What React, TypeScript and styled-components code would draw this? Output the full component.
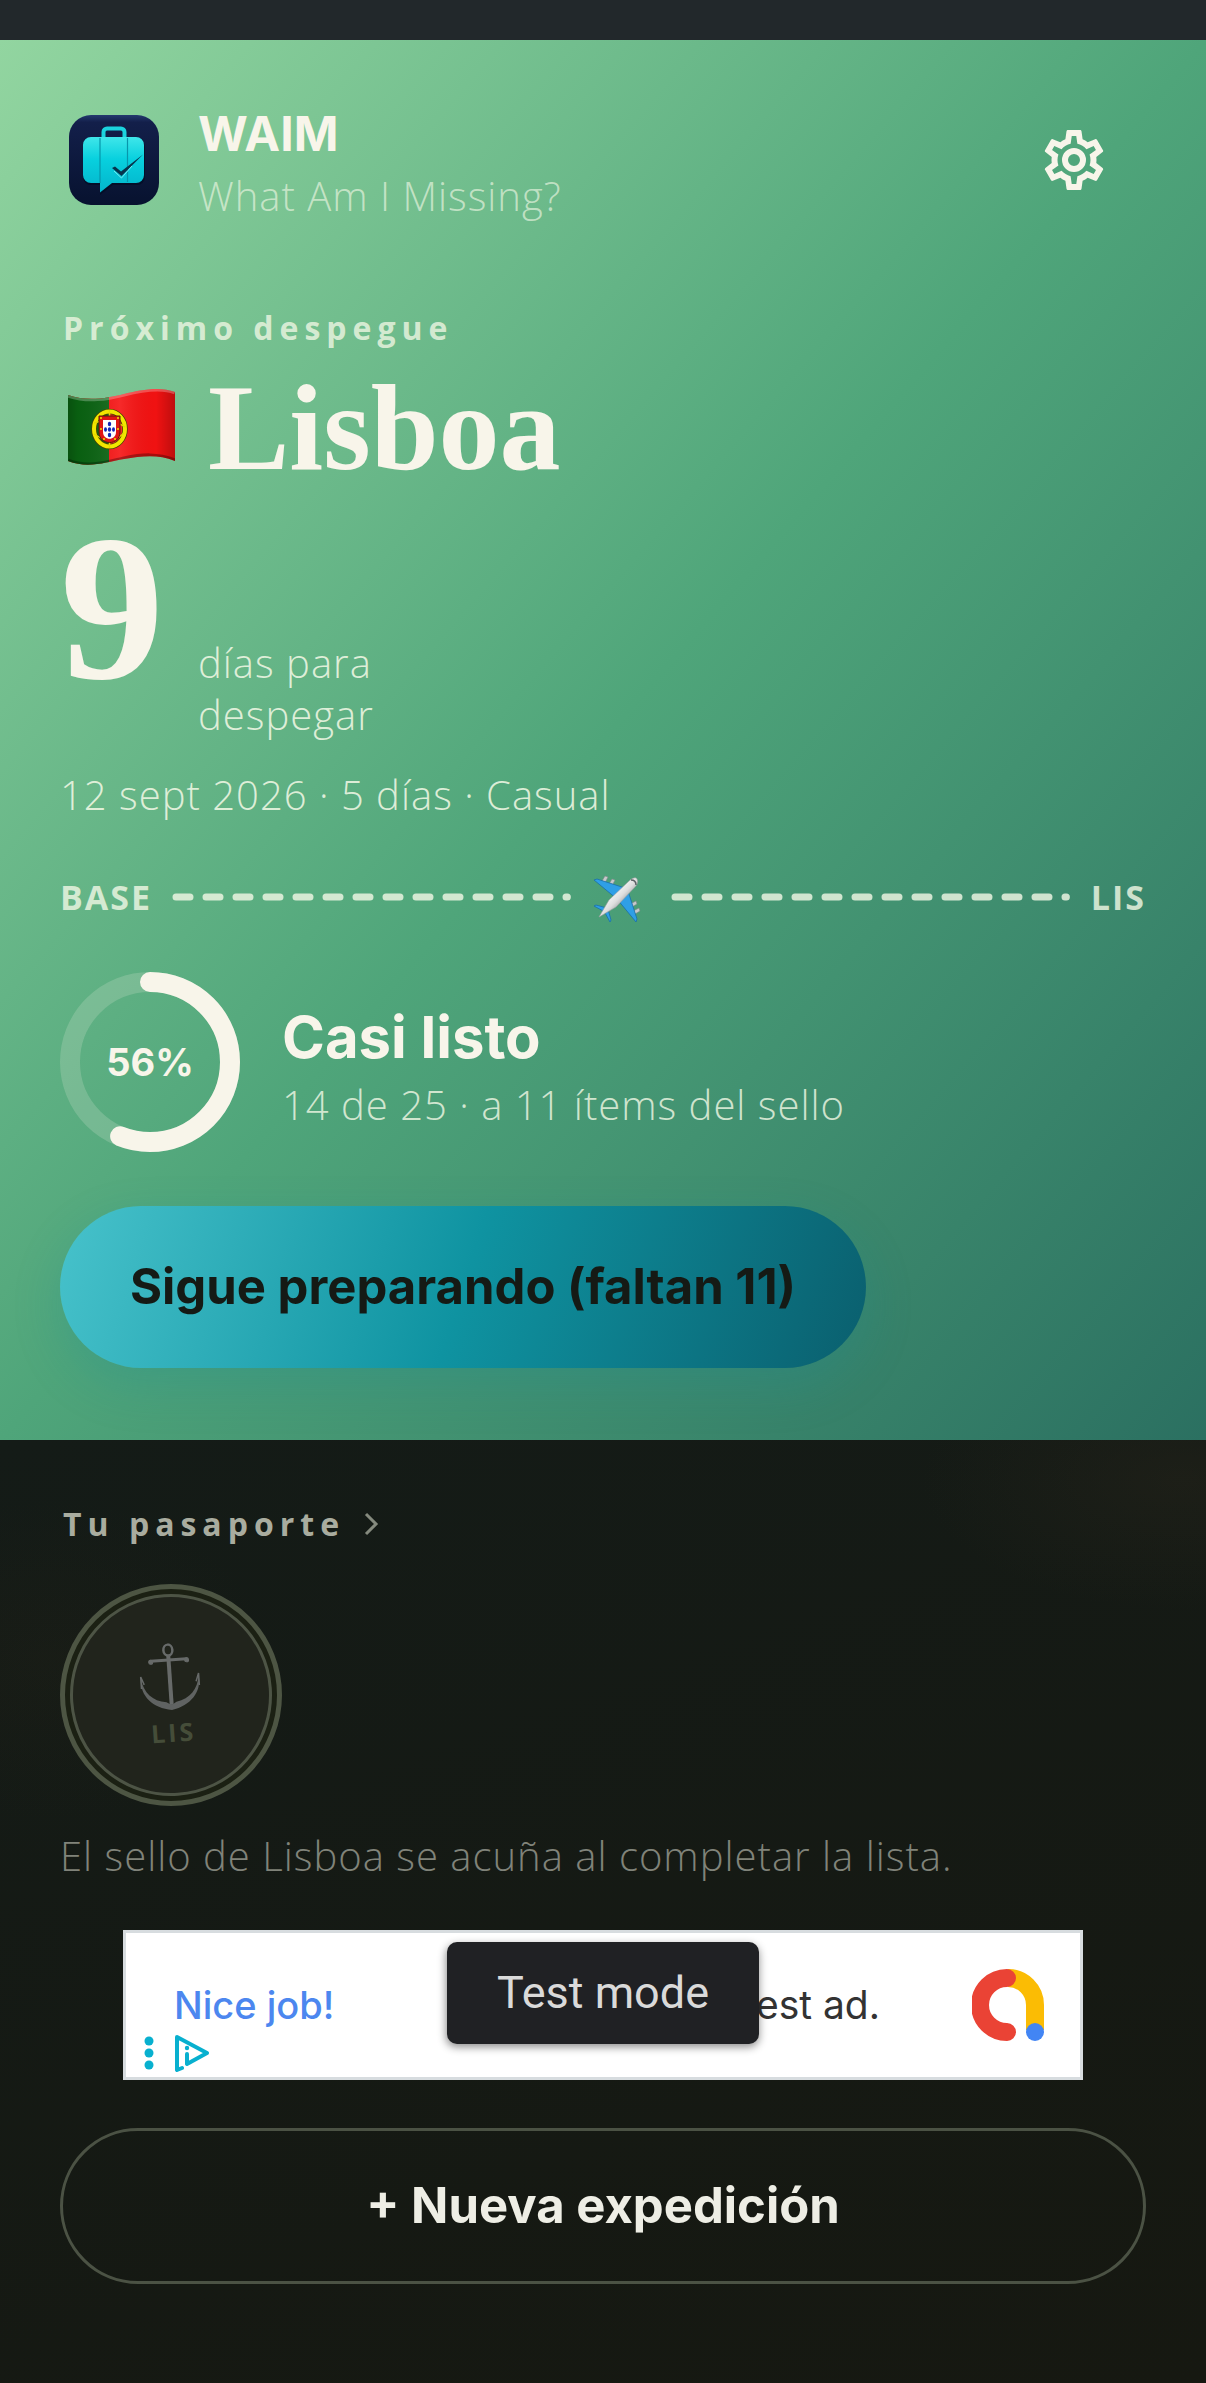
import React from "react";
import styled, { createGlobalStyle } from "styled-components";

const cream = "#f8f5ea";
const soft = "rgba(240, 247, 228, 0.88)";
const bodyFont = '"Open Sans", "Noto Sans", sans-serif';
const displayFont = 'Inter, "Liberation Sans", sans-serif';
const serifFont = '"Liberation Serif", serif';

const GlobalStyle = createGlobalStyle`
  *, *::before, *::after { box-sizing: border-box; }
  body { margin: 0; background: #151a15; }
  h1, h2, p { margin: 0; }
  button { border: 0; padding: 0; background: none; color: inherit; font: inherit; cursor: pointer; }
  svg { display: block; flex: none; }
`;

const Screen = styled.div`
  min-height: 100vh;
  display: flex;
  flex-direction: column;
  background: #151a15;
  font-family: ${bodyFont};
`;

const StatusBar = styled.div`
  height: 40px;
  background: #22282b;
`;

const Hero = styled.header`
  display: flex;
  flex-direction: column;
  padding: 58px 60px 72px;
  background: linear-gradient(to bottom right, #92d5a0 0%, #4fa57a 50%, #2b7061 100%);
  color: ${cream};
`;

const Brand = styled.div`
  display: flex;
  align-items: center;
  gap: 30px;
`;

const BrandText = styled.div`
  flex: 1;
`;

const BrandName = styled.h1`
  font: 700 48px/72px ${displayFont};
`;

const Text = styled.p<{ $tone?: string }>`
  font-size: 40px;
  font-weight: 350;
  line-height: 52px;
  letter-spacing: 1px;
  color: ${(p) => p.$tone ?? soft};
`;

const IconButton = styled.button`
  display: grid;
  place-items: center;
  width: 144px;
  height: 108px;
`;

const Eyebrow = styled.p`
  margin-top: 82px;
  padding-left: 3px;
  font-size: 32px;
  font-weight: 700;
  line-height: 48px;
  letter-spacing: 6px;
  color: rgba(240, 247, 228, 0.8);
`;

const City = styled.h2`
  display: flex;
  align-items: center;
  gap: 28px;
  margin-top: 10px;
  font: 700 122px/132px ${serifFont};
`;

const Countdown = styled.div`
  display: flex;
  align-items: baseline;
  gap: 34px;
  margin-top: 10px;
`;

const Days = styled.span`
  font: 700 208px/208px ${serifFont};
`;

const CountdownLabel = styled(Text)`
  width: 200px;
`;

const TripMeta = styled(Text)`
  margin-top: 28px;
`;

const Route = styled.div`
  display: flex;
  align-items: center;
  gap: 20px;
  margin-top: 46px;
  color: rgba(240, 247, 228, 0.82);
`;

const Stop = styled.span`
  font-size: 34px;
  font-weight: 700;
  line-height: 44px;
  letter-spacing: 2px;
`;

const DashSvg = styled.svg`
  flex: 1 1 0;
  min-width: 0;
  height: 8px;
  overflow: visible;
`;

const Progress = styled.div`
  display: flex;
  align-items: center;
  gap: 42px;
  margin-top: 45px;
`;

const Ring = styled.div`
  display: grid;
  place-items: center;
  width: 180px;
  height: 180px;
  > * { grid-area: 1 / 1; }
`;

const Percent = styled.span`
  font: 700 38px/48px ${displayFont};
`;

const ProgressText = styled.div`
  display: flex;
  flex-direction: column;
  gap: 2px;
  padding-top: 4px;
`;

const ProgressTitle = styled.h2`
  font: 700 58px/80px ${displayFont};
`;

const PrimaryButton = styled.button`
  align-self: flex-start;
  height: 162px;
  margin-top: 54px;
  padding: 0 70px;
  border-radius: 81px;
  background: linear-gradient(108deg, #47c2cb 0%, #0f93a1 50%, #0a5f6e 100%);
  box-shadow: 0 18px 48px rgba(20, 140, 160, 0.24);
  color: #151a15;
  font: 700 49px/60px ${displayFont};
`;

const Main = styled.main`
  flex: 1;
  display: flex;
  flex-direction: column;
  padding: 60px 60px 99px;
  background:
    radial-gradient(260px 130px at 98% 40px, rgba(48, 42, 30, 0.3), transparent),
    radial-gradient(220px 160px at 4% 220px, rgba(46, 38, 24, 0.16), transparent),
    linear-gradient(160deg, #141b17, #161811);
`;

const PassportLink = styled.a`
  display: flex;
  align-items: center;
  align-self: flex-start;
  gap: 18px;
  padding-left: 3px;
  color: #a9ac9f;
  font-size: 32px;
  font-weight: 700;
  line-height: 48px;
  letter-spacing: 6px;
  text-decoration: none;
`;

const Stamp = styled.div`
  width: 222px;
  height: 222px;
  margin-top: 36px;
  padding: 5px;
  border: 5px solid #4d5543;
  border-radius: 50%;
  background: #1b2013;
`;

const StampFace = styled.div`
  display: flex;
  flex-direction: column;
  align-items: center;
  justify-content: center;
  gap: 5px;
  height: 100%;
  border: 3px solid #4d5445;
  border-radius: 50%;
  background: #21241c;
  transform: rotate(-4deg);
`;

const StampCode = styled.span`
  color: #454d39;
  font-size: 25px;
  font-weight: 700;
  line-height: 32px;
  letter-spacing: 3px;
`;

const Caption = styled(Text)`
  margin-top: 24px;
`;

const Ad = styled.aside`
  position: relative;
  display: flex;
  align-items: center;
  align-self: center;
  width: 100%;
  max-width: 960px;
  height: 150px;
  margin-top: 48px;
  padding: 0 36px 0 48px;
  border: 3px solid #d7dcdf;
  background: #fff;
  font: 400 39px/48px ${displayFont};
  color: #333;
`;

const AdHeadline = styled.span`
  flex: 1;
  font-size: 38px;
  font-weight: 500;
  color: #4c87ef;
`;

const AdCopy = styled.span`
  margin-right: 92px;
`;

const AdControls = styled.div`
  position: absolute;
  left: 16px;
  bottom: 5px;
  display: flex;
  align-items: center;
  gap: 18px;
`;

const Toast = styled.div`
  position: absolute;
  top: 9px;
  left: 50%;
  transform: translateX(-50%);
  padding: 20px 50px;
  border-radius: 10px;
  background: #202124;
  box-shadow: 0 3px 9px rgba(0, 0, 0, 0.45);
  color: #dadada;
  font: 400 45px/62px Roboto, sans-serif;
  white-space: nowrap;
`;

const OutlineButton = styled.button`
  height: 156px;
  margin-top: 48px;
  border: 3px solid #4b5244;
  border-radius: 78px;
  color: #eeeee5;
  font: 700 49px/60px ${displayFont};
`;

const Logo = () => (
  <svg width="108" height="108" viewBox="0 0 108 108" aria-hidden="true">
    <defs>
      <linearGradient id="tile" x1="0" y1="0" x2="0" y2="1">
        <stop offset="0" stopColor="#24396f" />
        <stop offset="0.08" stopColor="#131f4a" />
        <stop offset="1" stopColor="#07122f" />
      </linearGradient>
      <linearGradient id="case" x1="0" y1="0" x2="0" y2="1">
        <stop offset="0" stopColor="#3fe6ea" />
        <stop offset="0.4" stopColor="#08d0de" />
        <stop offset="1" stopColor="#03b4cb" />
      </linearGradient>
    </defs>
    <rect x="9" y="9" width="90" height="90" rx="22" fill="url(#tile)" />
    <path d="M43.500 31v-5a3.500 3.500 0 0 1 3.500-3.500h14a3.500 3.500 0 0 1 3.500 3.500v5" fill="none" stroke="#1bd3de" strokeWidth="4" />
    <path d="M31 33h46a8 8 0 0 1 8 8v30a8 8 0 0 1-8 8H53L40 89V79h-9a8 8 0 0 1-8-8V41a8 8 0 0 1 8-8z" fill="#020a20" opacity="0.6" />
    <path d="M31 31h45a8 8 0 0 1 8 8v30a8 8 0 0 1-8 8H52L40 86.500V77h-9a8 8 0 0 1-8-8V39a8 8 0 0 1 8-8z" fill="url(#case)" />
    <path d="M40 32v45M67.500 32v44" stroke="#0896ab" strokeWidth="1.200" />
    <path d="M52 62l3-1.500 6 5 22-17L61.500 70z" fill="#07334c" />
    <path d="M54 65l7.500 7L72 60" fill="none" stroke="#72edf2" strokeWidth="1" />
  </svg>
);

const Gear = () => (
  <svg width="72" height="72" viewBox="0 0 24 24" fill="currentColor" aria-hidden="true">
    <path d="M12,8A4,4 0 0,1 16,12A4,4 0 0,1 12,16A4,4 0 0,1 8,12A4,4 0 0,1 12,8M12,10A2,2 0 0,0 10,12A2,2 0 0,0 12,14A2,2 0 0,0 14,12A2,2 0 0,0 12,10M10,22C9.75,22 9.54,21.82 9.5,21.58L9.13,18.93C8.5,18.68 7.96,18.34 7.44,17.94L4.95,18.95C4.73,19.03 4.46,18.95 4.34,18.73L2.34,15.27C2.21,15.05 2.27,14.78 2.46,14.63L4.57,12.97L4.5,12L4.57,11L2.46,9.37C2.27,9.22 2.21,8.95 2.34,8.73L4.34,5.27C4.46,5.05 4.73,4.96 4.95,5.05L7.44,6.05C7.96,5.66 8.5,5.32 9.13,5.07L9.5,2.42C9.54,2.18 9.75,2 10,2H14C14.25,2 14.46,2.18 14.5,2.42L14.87,5.07C15.5,5.32 16.04,5.66 16.56,6.05L19.05,5.05C19.27,4.96 19.54,5.05 19.66,5.27L21.66,8.73C21.79,8.95 21.73,9.22 21.54,9.37L19.43,11L19.5,12L19.43,13L21.54,14.63C21.73,14.78 21.79,15.05 21.66,15.27L19.66,18.73C19.54,18.95 19.27,19.04 19.05,18.95L16.56,17.95C16.04,18.34 15.5,18.68 14.87,18.93L14.5,21.58C14.46,21.82 14.25,22 14,22H10M11.25,4L10.88,6.61C9.68,6.86 8.62,7.5 7.85,8.39L5.44,7.35L4.69,8.65L6.8,10.2C6.4,11.37 6.4,12.64 6.8,13.8L4.68,15.36L5.43,16.66L7.86,15.62C8.63,16.5 9.68,17.14 10.87,17.38L11.24,20H12.76L13.13,17.39C14.32,17.14 15.37,16.5 16.14,15.62L18.57,16.66L19.32,15.36L17.2,13.81C17.6,12.64 17.6,11.37 17.2,10.2L19.31,8.65L18.56,7.35L16.15,8.39C15.38,7.5 14.32,6.86 13.12,6.62L12.75,4H11.25Z" />
  </svg>
);

const Flag = () => (
  <svg width="120" height="96" viewBox="0 0 120 96" role="img" aria-label="Portugal">
    <defs>
      <clipPath id="cloth">
        <path d="M8 15C28 22 48 18 64 14S100 6 115 12V81C98 74 82 76 64 79S28 89 8 81Z" />
      </clipPath>
      <linearGradient id="fold" x1="0" x2="1" y1="0" y2="0">
        <stop offset="0" stopColor="#000" stopOpacity="0.3" />
        <stop offset="0.15" stopColor="#000" stopOpacity="0.05" />
        <stop offset="0.5" stopColor="#fff" stopOpacity="0.1" />
        <stop offset="0.8" stopColor="#000" stopOpacity="0.02" />
        <stop offset="1" stopColor="#000" stopOpacity="0.28" />
      </linearGradient>
    </defs>
    <g clipPath="url(#cloth)">
      <rect width="120" height="96" fill="#f51212" />
      <rect width="49" height="96" fill="#0a6412" />
      <rect width="120" height="96" fill="url(#fold)" />
      <path d="M8 15C28 22 48 18 64 14S100 6 115 12" fill="none" stroke="#fff" strokeOpacity="0.25" strokeWidth="5" />
      <path d="M8 81C28 89 46 83 64 79S98 74 115 81" fill="none" stroke="#000" strokeOpacity="0.3" strokeWidth="5" />
    </g>
    <ellipse cx="49.500" cy="49" rx="15.500" ry="17.500" fill="none" stroke="#4b4300" strokeWidth="5.500" />
    <ellipse cx="49.500" cy="49" rx="15.500" ry="17.500" fill="none" stroke="#f2e600" strokeWidth="4" />
    <path d="M49.500 30v38M34 43c10-4 22-2 31 4M34 54c10 7 22 7 30-1" fill="none" stroke="#e5d800" strokeWidth="1.500" />
    <path d="M39 36h21v16c0 14-21 14-21 0z" fill="#e01515" stroke="#5c1a08" strokeWidth="1" />
    <path d="M43 40h13v12c0 9-13 9-13 0z" fill="#fff" />
    <g fill="#1328b8">
      <ellipse cx="49.500" cy="44" rx="1.700" ry="2.300" />
      <ellipse cx="45.500" cy="49.500" rx="1.500" ry="2.300" />
      <ellipse cx="49.500" cy="49.500" rx="1.700" ry="2.300" />
      <ellipse cx="53.500" cy="49.500" rx="1.500" ry="2.300" />
      <ellipse cx="49.500" cy="55" rx="1.700" ry="2.300" />
    </g>
    <g fill="#f2e600">
      <circle cx="41" cy="38" r="1" />
      <circle cx="58" cy="38" r="1" />
      <circle cx="41" cy="49" r="1" />
      <circle cx="58" cy="49" r="1" />
      <circle cx="44" cy="59" r="1" />
      <circle cx="55" cy="59" r="1" />
    </g>
  </svg>
);

const Dashes = () => (
  <DashSvg aria-hidden="true">
    <line x1="4" y1="4" x2="99%" y2="4" stroke="currentColor" strokeWidth="7" strokeLinecap="round" strokeDasharray="14 16" />
  </DashSvg>
);

const Plane = () => (
  <svg width="60" height="60" viewBox="0 0 60 60" aria-hidden="true">
    <defs>
      <linearGradient id="hull" x1="0.300" y1="0.300" x2="0.700" y2="0.700">
        <stop offset="0" stopColor="#ffffff" />
        <stop offset="0.55" stopColor="#dedede" />
        <stop offset="1" stopColor="#8f9295" />
      </linearGradient>
    </defs>
    <g fill="#c6c9cb" stroke="#80868a" strokeWidth="0.600">
      <path d="M11 14l3-5 3 1-3 6zM18 17l3-5 3 1-3 6zM44 47l5-3-1-3-6 3zM41 40l5-3-1-3-6 3z" />
    </g>
    <g fill="#2f9fe6" stroke="#1b6ea8" strokeWidth="0.800" strokeLinejoin="round">
      <path d="M3 13l3-1 28 9-8 11z" />
      <path d="M45 55l1-3-9-28-11 8z" />
      <path d="M3 39l2-1 11 3-2 4z" />
      <path d="M19 55l1-2-3-11-4 2z" />
    </g>
    <path d="M8 50L18 33 38 14c4-3.500 7-4 8-2s1 5-2 8L25 40z" fill="url(#hull)" stroke="#9a9da0" strokeWidth="0.600" />
    <path d="M40 13c3 0 5 2 5 5" fill="none" stroke="#5b6064" strokeWidth="1.500" />
  </svg>
);

const RADIUS = 80;
const LENGTH = 2 * Math.PI * RADIUS;

const ProgressRing = ({ value }: { value: number }) => (
  <Ring role="progressbar" aria-valuenow={value} aria-valuemin={0} aria-valuemax={100} aria-label="Progreso">
    <svg width="180" height="180" viewBox="0 0 180 180" fill="none" strokeWidth="20" aria-hidden="true">
      <circle cx="90" cy="90" r={RADIUS} stroke={cream} strokeOpacity="0.18" />
      <circle
        cx="90"
        cy="90"
        r={RADIUS}
        stroke={cream}
        strokeLinecap="round"
        strokeDasharray={`${(LENGTH * value) / 100} ${LENGTH}`}
        transform="rotate(-90 90 90)"
      />
    </svg>
    <Percent>{value}%</Percent>
  </Ring>
);

const Chevron = () => (
  <svg width="16" height="24" viewBox="0 0 16 24" fill="none" stroke="#858a7e" strokeWidth="3" aria-hidden="true">
    <path d="M3 2l10 10L3 22" />
  </svg>
);

const Anchor = () => (
  <svg width="62" height="68" viewBox="0 0 62 68" fill="none" stroke="#676a69" aria-hidden="true">
    <ellipse cx="31" cy="7" rx="4.500" ry="5.500" strokeWidth="2.500" />
    <path d="M31 12v50" strokeWidth="4" />
    <path d="M13 17h36" strokeWidth="3" strokeLinecap="round" />
    <circle cx="13" cy="18" r="2" fill="#676a69" strokeWidth="1" />
    <circle cx="49" cy="18" r="2" fill="#676a69" strokeWidth="1" />
    <path d="M2 34c-2 17 10 30 29 33 19-3 31-16 29-33-2 14-10 23-24 25l-5 3-5-3C12 57 4 48 2 34z" fill="#606362" stroke="none" />
    <path d="M2 44V32l3 8M60 44V32l-3 8" strokeWidth="1.500" />
  </svg>
);

const Dots = () => (
  <svg width="14" height="36" viewBox="0 0 14 36" fill="#08b0cf" aria-hidden="true">
    <circle cx="7" cy="6" r="4.500" />
    <circle cx="7" cy="18" r="4.500" />
    <circle cx="7" cy="30" r="4.500" />
  </svg>
);

const AdChoices = () => (
  <svg width="36" height="38" viewBox="0 0 36 38" fill="none" stroke="#08b0cf" strokeWidth="4" strokeLinecap="round" strokeLinejoin="round" aria-hidden="true">
    <path d="M8 34l-5 2V3l30 16-20 11V20" />
    <circle cx="13" cy="14" r="2.200" fill="#08b0cf" stroke="none" />
  </svg>
);

const AdLogo = () => (
  <svg width="72" height="72" viewBox="0 0 72 72" fill="none" strokeWidth="18" aria-hidden="true">
    <path d="M36 9a27 27 0 0 1 27 27v25" stroke="#fbbc04" />
    <path d="M35 9a27 27 0 0 0 0 54" stroke="#ea4335" strokeLinecap="round" />
    <circle cx="63" cy="63" r="9" fill="#4285f4" />
  </svg>
);

export default function App() {
  return (
    <Screen>
      <GlobalStyle />
      <StatusBar />
      <Hero>
        <Brand>
          <Logo />
          <BrandText>
            <BrandName>WAIM</BrandName>
            <Text $tone="rgba(240, 247, 228, 0.65)">What Am I Missing?</Text>
          </BrandText>
          <IconButton type="button" aria-label="Ajustes">
            <Gear />
          </IconButton>
        </Brand>
        <Eyebrow>Próximo despegue</Eyebrow>
        <City>
          <Flag />
          Lisboa
        </City>
        <Countdown>
          <Days>9</Days>
          <CountdownLabel>días para despegar</CountdownLabel>
        </Countdown>
        <TripMeta>12 sept 2026 · 5 días · Casual</TripMeta>
        <Route>
          <Stop>BASE</Stop>
          <Dashes />
          <Plane />
          <Dashes />
          <Stop>LIS</Stop>
        </Route>
        <Progress>
          <ProgressRing value={56} />
          <ProgressText>
            <ProgressTitle>Casi listo</ProgressTitle>
            <Text $tone="rgba(240, 247, 228, 0.82)">14 de 25 · a 11 ítems del sello</Text>
          </ProgressText>
        </Progress>
        <PrimaryButton type="button">Sigue preparando (faltan 11)</PrimaryButton>
      </Hero>
      <Main>
        <PassportLink href="#pasaporte">
          Tu pasaporte
          <Chevron />
        </PassportLink>
        <Stamp>
          <StampFace>
            <Anchor />
            <StampCode>LIS</StampCode>
          </StampFace>
        </Stamp>
        <Caption $tone="#80837a">El sello de Lisboa se acuña al completar la lista.</Caption>
        <Ad aria-label="Anuncio">
          <AdHeadline>Nice job!</AdHeadline>
          <AdCopy>est ad.</AdCopy>
          <AdLogo />
          <AdControls>
            <button type="button" aria-label="Opciones del anuncio">
              <Dots />
            </button>
            <button type="button" aria-label="AdChoices">
              <AdChoices />
            </button>
          </AdControls>
          <Toast role="status">Test mode</Toast>
        </Ad>
        <OutlineButton type="button">+ Nueva expedición</OutlineButton>
      </Main>
    </Screen>
  );
}
